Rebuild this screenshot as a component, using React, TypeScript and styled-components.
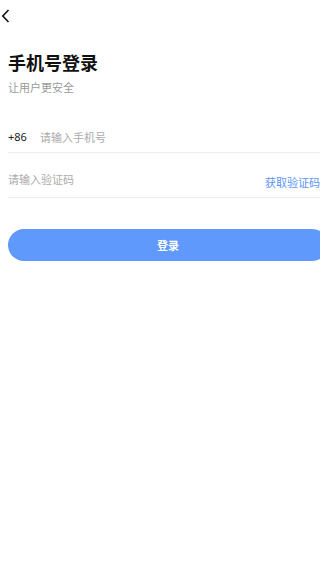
import styled, { createGlobalStyle } from 'styled-components';

const GlobalStyle = createGlobalStyle`
  html, body {
    margin: 0;
    padding: 0;
    background: #fff;
    overflow-x: hidden;
  }
  body {
    font-family: "Noto Sans", "Noto Sans CJK SC", sans-serif;
  }
`;

const App = () => {
  return (
    <>
      <GlobalStyle />
      <Page>
        <Header>
          <BackButton aria-label="back">
            <svg width="9" height="14" viewBox="0 0 9 14" fill="none">
              <path d="M7.5 1 L1.8 7 L7.5 13" stroke="#111" strokeWidth="1.6" />
            </svg>
          </BackButton>
        </Header>

        <Content>
          <Title>手机号登录</Title>
          <Subtitle>让用户更安全</Subtitle>

          <Form>
            <Field $height={31} $top={26}>
              <Prefix>+86</Prefix>
              <Input placeholder="请输入手机号" />
            </Field>
            <Field $height={44} $top={0}>
              <Input placeholder="请输入验证码" />
              <CodeLink>获取验证码</CodeLink>
            </Field>
            <SubmitButton>登录</SubmitButton>
          </Form>
        </Content>
      </Page>
    </>
  );
};

export default App;

const Page = styled.div`
  width: 320px;
  min-height: 565px;
`;

const Header = styled.header`
  height: 50px;
  display: flex;
  align-items: flex-start;
`;

const BackButton = styled.button`
  margin: 9px 0 0 1px;
  padding: 0;
  border: none;
  background: none;
  width: 10px;
  height: 14px;
  display: flex;
`;

const Content = styled.main`
  padding-left: 8px;
  width: 320px;
`;

const Title = styled.h1`
  margin: 0;
  font-family: "Noto Sans CJK SC", sans-serif;
  font-size: 18px;
  line-height: 24px;
  font-weight: 700;
  color: #111;
`;

const Subtitle = styled.p`
  margin: 5px 0 0;
  font-family: "Noto Sans CJK SC", sans-serif;
  font-size: 11px;
  line-height: 16px;
  color: #9a9a9a;
`;

const Form = styled.form`
  display: flex;
  flex-direction: column;
`;

const Field = styled.div<{ $height: number; $top: number }>`
  margin-top: ${(p) => p.$top}px;
  display: flex;
  align-items: flex-end;
  box-sizing: content-box;
  padding-bottom: ${(p) => (p.$height > 40 ? 10 : 7)}px;
  height: ${(p) => p.$height - (p.$height > 40 ? 10 : 7)}px;
  border-bottom: 1px solid #ececec;
`;

const Prefix = styled.span`
  font-family: "Noto Sans", sans-serif;
  font-size: 11px;
  line-height: 16px;
  color: #222;
  width: 32px;
`;

const Input = styled.input`
  flex: 1;
  min-width: 0;
  border: none;
  outline: none;
  padding: 0;
  font-family: "Noto Sans CJK SC", sans-serif;
  font-size: 11px;
  line-height: 16px;
  height: 16px;
  color: #222;
  background: transparent;

  &::placeholder {
    color: #ababab;
  }
`;

const CodeLink = styled.span`
  font-family: "Noto Sans CJK SC", sans-serif;
  font-size: 11px;
  line-height: 16px;
  color: #5b95f9;
  margin: 0 8px -3px 0;
  white-space: nowrap;
`;

const SubmitButton = styled.button`
  margin-top: 31px;
  height: 32px;
  border: none;
  border-radius: 16px;
  background: #6099fc;
  color: #fff;
  font-family: "Noto Sans CJK SC", sans-serif;
  font-size: 11px;
  font-weight: 700;
  padding: 0;
`;
